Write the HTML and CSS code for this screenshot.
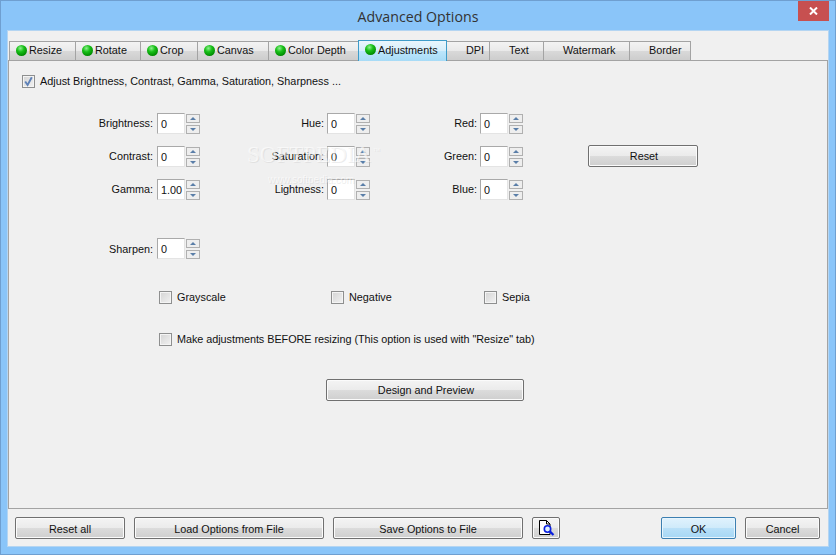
FILE: index.html
```html
<!DOCTYPE html>
<html lang="en">
<head>
<meta charset="utf-8">
<title>Advanced Options</title>
<link rel="stylesheet" href="styles.css">
</head>
<body>
<div class="window">
  <header class="titlebar">
    <span class="title">Advanced Options</span>
    <span class="close"><svg width="9" height="8" viewBox="0 0 9 8"><path d="M1 0.5 L8 7.5 M8 0.5 L1 7.5" stroke="#fff" stroke-width="2" fill="none"/></svg></span>
  </header>
  <div class="client">
    <nav class="tabs">
      <span class="tab"><i class="led"></i>Resize</span>
      <span class="tab"><i class="led"></i>Rotate</span>
      <span class="tab"><i class="led"></i>Crop</span>
      <span class="tab"><i class="led"></i>Canvas</span>
      <span class="tab"><i class="led"></i>Color Depth</span>
      <span class="tab active"><i class="led"></i>Adjustments</span>
      <span class="tab">DPI</span>
      <span class="tab">Text</span>
      <span class="tab">Watermark</span>
      <span class="tab">Border</span>
    </nav>
    <main class="pane">
      <label class="check master"><span class="box"><svg width="11" height="11" viewBox="0 0 11 11"><path d="M2.2 5.5 L4.6 9 L8.8 1.2" stroke="#5f82b8" stroke-width="1.9" fill="none"/></svg></span>Adjust Brightness, Contrast, Gamma, Saturation, Sharpness ...</label>

      <div class="spin-grid">
        <div class="field"><span>Brightness:</span><span class="input">0</span><span class="arrows"><b class="up"></b><b class="down"></b></span></div>
        <div class="field near"><span>Hue:</span><span class="input">0</span><span class="arrows"><b class="up"></b><b class="down"></b></span></div>
        <div class="field near"><span>Red:</span><span class="input">0</span><span class="arrows"><b class="up"></b><b class="down"></b></span></div>
        <div></div>
        <div class="field"><span>Contrast:</span><span class="input">0</span><span class="arrows"><b class="up"></b><b class="down"></b></span></div>
        <div class="field near"><span>Saturation:</span><span class="input">0</span><span class="arrows"><b class="up"></b><b class="down"></b></span></div>
        <div class="field near"><span>Green:</span><span class="input">0</span><span class="arrows"><b class="up"></b><b class="down"></b></span></div>
        <button class="btn reset">Reset</button>
        <div class="field"><span>Gamma:</span><span class="input">1.00</span><span class="arrows"><b class="up"></b><b class="down"></b></span></div>
        <div class="field near"><span>Lightness:</span><span class="input">0</span><span class="arrows"><b class="up"></b><b class="down"></b></span></div>
        <div class="field near"><span>Blue:</span><span class="input">0</span><span class="arrows"><b class="up"></b><b class="down"></b></span></div>
      </div>

      <div class="field sharpen"><span>Sharpen:</span><span class="input">0</span><span class="arrows"><b class="up"></b><b class="down"></b></span></div>

      <div class="effects">
        <label class="check"><span class="box"></span>Grayscale</label>
        <label class="check"><span class="box"></span>Negative</label>
        <label class="check"><span class="box"></span>Sepia</label>
      </div>
      <label class="check before"><span class="box"></span>Make adjustments BEFORE resizing (This option is used with "Resize" tab)</label>
      <button class="btn design">Design and Preview</button>

      <div class="watermark"><span class="wm-big">SOFTPEDIA<sup class="wm-tm">™</sup></span><span class="wm-small">www.softpedia.com</span></div>
    </main>
    <footer class="footer">
      <button class="btn w110">Reset all</button>
      <button class="btn w190">Load Options from File</button>
      <button class="btn w190">Save Options to File</button>
      <button class="btn icon-btn"><svg width="18" height="16" viewBox="0 0 18 16"><path d="M1.5 .5 H8.5 L12 4 V14.5 H1.5 Z" fill="#fff" stroke="#000"/><path d="M8.5 .5 V4 H12" fill="none" stroke="#000"/><circle cx="9.5" cy="9" r="3.2" fill="#dff0ff" stroke="#0a1fe0" stroke-width="1.6"/><path d="M11.8 11.4 L15.5 15" stroke="#0a1fe0" stroke-width="2.2"/></svg></button>
      <button class="btn w75 ok">OK</button>
      <button class="btn w75">Cancel</button>
    </footer>
  </div>
</div>
</body>
</html>
```
FILE: styles.css
```css
* { box-sizing: border-box; }
html, body { margin: 0; padding: 0; }
body { font-family: "Liberation Sans", Arial, sans-serif; font-size: 10.84px; color: #111; }

.window {
  width: 836px; height: 555px;
  background: #8ac5f9;
  border: 1px solid #6f9fd0;
  display: flex; flex-direction: column;
}
.titlebar {
  height: 29px; flex: none;
  display: flex; justify-content: center; align-items: center;
  position: relative;
}
.title { font-family: "Open Sans", sans-serif; font-size: 14.2px; color: #333; margin-top: 1px; }
.close {
  position: absolute; right: 6px; top: 0;
  width: 31px; height: 20px;
  background: #c75050;
  display: flex; align-items: center; justify-content: center;
}

.client {
  flex: 1;
  margin: 0 6px 7px 6px;
  background: #f0f0f0;
  border: 1px solid #b4d5f2;
  display: flex; flex-direction: column;
  min-height: 0;
}
.tabs {
  display: grid;
  grid-template-columns: 66px 65px 57px 71px 90px 88px 43px 54px 86px 61px;
  height: 29px;
  padding: 10px 0 0 1px;
  flex: none;
}
.tab {
  display: flex; align-items: center;
  padding: 0 0 2px 19px;
  height: 20px;
  position: relative;
  border: 1px solid #a3a3a3;
  background: linear-gradient(#f3f3f3, #e9e9e9 50%, #d9d9d9 50%, #cdcdcd);
  margin-right: -1px;
  white-space: nowrap;
}
.tab.active {
  border-color: #3f9cc9;
  border-bottom: 0;
  height: 21px;
  margin-top: -1px;
  background: linear-gradient(#eaf6fd, #d5eefb 50%, #bde6fb 50%, #a7dbf6);
  z-index: 1;
}
.led {
  position: absolute; left: 6px; top: 3px;
  width: 11px; height: 11px; border-radius: 50%;
  background: radial-gradient(circle at 40% 30%, #8ff08f 0, #18c018 35%, #008a00 75%, #005a00 100%);
}

.pane {
  flex: 1;
  position: relative;
  border: 1px solid #a3a3a3;
  padding: 14px 0 0 13px;
  min-height: 0;
}
.check { display: flex; align-items: flex-start; gap: 5px; height: 13px; line-height: 12px; white-space: nowrap; }
.box {
  width: 13px; height: 13px; flex: none;
  border: 1px solid #8e8f8f;
  background: linear-gradient(135deg, #d4d4d4, #f2f2f2);
  box-shadow: inset 0 0 0 1px #f4f4f4;
  display: flex; align-items: center; justify-content: center;
}
.box svg { display: block; }

.spin-grid {
  display: grid;
  grid-template-columns: 178px 170px 153px 175px;
  grid-auto-rows: 21px;
  row-gap: 12px;
  margin-top: 25px;
}
.field { display: flex; justify-content: flex-end; align-items: center; }
.field > span:first-child { margin-right: 4px; position: relative; top: -1px; }
.field.near > span:first-child { margin-right: 3px; }
.input {
  width: 28px; height: 21px;
  background: #fff;
  border: 1px solid #e4e4e4;
  border-top-color: #a9a9a9;
  border-left-color: #a9a9a9;
  padding-left: 3px;
  line-height: 21px;
  margin-right: 1px;
}
.arrows { width: 14px; height: 21px; display: flex; flex-direction: column; justify-content: space-between; padding: 1px 0 0; }
.arrows b {
  display: block; width: 14px; height: 9px;
  border: 1px solid #b0b0b0;
  background: #eeeeee;
  position: relative;
}
.arrows b::after {
  content: ""; position: absolute; left: 3px; top: 2px;
  border-left: 3px solid transparent; border-right: 3px solid transparent;
}
.arrows .up::after { border-bottom: 3px solid #5a7ea8; }
.arrows .down::after { border-top: 3px solid #5a7ea8; }

.btn {
  font: inherit; color: #111;
  height: 22px; padding: 1px 0 0;
  border: 1px solid #707070; border-radius: 2px;
  background: linear-gradient(#f4f4f4, #ebebeb 50%, #dcdcdc 50%, #cfcfcf);
  box-shadow: inset 0 0 0 1px #fbfbfb;
}
.reset { width: 110px; margin: -1px 0 0 65px; padding: 0 0 0 2px; }

.sharpen { width: 178px; margin-top: 38px; }
.sharpen > span:first-child { top: 0; }

.effects {
  display: grid;
  grid-template-columns: 172px 153px auto;
  margin: 32px 0 0 137px;
}
.before { margin: 29px 0 0 137px; letter-spacing: -.04px; }
.design { display: block; width: 198px; margin: 33px 0 0 304px; padding: 0 0 0 2px; }

.watermark {
  position: absolute; left: 238px; top: 82px;
  display: flex; flex-direction: column;
  color: rgba(255, 255, 255, .6);
  text-shadow: 1px 1px 0 rgba(190, 190, 190, .3);
  pointer-events: none;
  white-space: nowrap;
}
.wm-big { font-family: "Liberation Serif", serif; font-size: 23px; line-height: 24px; }
.wm-tm { font-size: 7px; line-height: 0; margin-left: 2px; }
.wm-small { font-size: 10px; line-height: 12px; margin: 7px 0 0 21px; }

.footer {
  flex: none;
  height: 37px;
  display: flex; align-items: flex-start; gap: 9px;
  padding: 8px 8px 0 7px;
}
.w110 { width: 110px; }
.w190 { width: 190px; }
.w75 { width: 75px; }
.icon-btn { width: 28px; display: flex; align-items: center; justify-content: center; padding: 0 0 0 2px; }
.ok {
  margin-left: 92px;
  border-color: #3c7fb1;
  background: linear-gradient(#e0f2fd, #cfeafa 50%, #b9e0f8 50%, #a6d7f5);
  box-shadow: inset 0 0 0 1px #e8f5fd;
}
```
